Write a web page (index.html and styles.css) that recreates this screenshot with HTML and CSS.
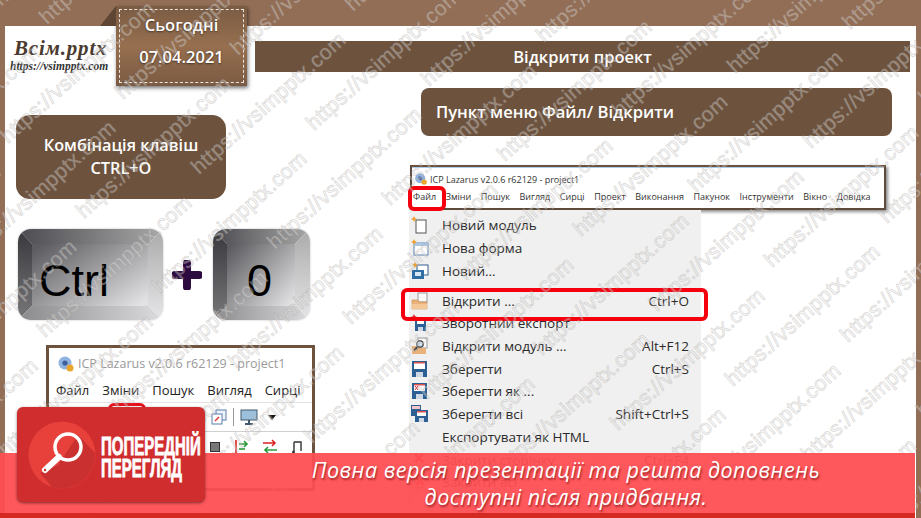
FILE: index.html
```html
<!DOCTYPE html>
<html lang="uk">
<head>
    <meta charset="UTF-8">
    <title>Відкрити проект</title>
    <link rel="stylesheet" href="styles.css">
</head>
<body>
    <div class="slide">
        <div class="sheet">
            <header class="head">
                <div class="logo">
                    <div class="logo-name">Всім.pptx</div>
                    <div class="logo-url">https://vsimpptx.com</div>
                </div>
                <div class="date-tag">
                    <span class="fold"></span>
                    <div class="date-inner">
                        <div>Сьогодні</div>
                        <div>07.04.2021</div>
                    </div>
                </div>
                <h1 class="title-bar">Відкрити проект</h1>
            </header>

            <div class="columns">
                <section class="left">
                    <div class="combo-box">Комбінація клавіш<br>CTRL+O</div>
                    <div class="keys">
                        <div class="key key-ctrl">
                            <svg class="bevel" width="145" height="91" viewBox="0 0 145 91">
                                <defs>
                                    <linearGradient id="topG" x1="0" x2="1" y1="0" y2="0"><stop offset="0" stop-color="#4b4b50"/><stop offset="1" stop-color="#a8a8a8"/></linearGradient>
                                    <linearGradient id="leftG" x1="0" x2="0" y1="0" y2="1"><stop offset="0" stop-color="#38383c"/><stop offset="1" stop-color="#77777a"/></linearGradient>
                                    <linearGradient id="rightG" x1="0" x2="0" y1="0" y2="1"><stop offset="0" stop-color="#aaa"/><stop offset="1" stop-color="#e6e6e8"/></linearGradient>
                                    <linearGradient id="botG" x1="0" x2="1" y1="0" y2="0"><stop offset="0" stop-color="#8a8a8c"/><stop offset="1" stop-color="#dcdcde"/></linearGradient>
                                    <linearGradient id="faceG" x1="0" x2="1" y1="0.1" y2="0.9"><stop offset="0" stop-color="#5c5c60"/><stop offset="1" stop-color="#e2e2e4"/></linearGradient>
                                </defs>
                                <polygon points="0,0 145,0 130,15 14,15" fill="url(#topG)"/>
                                <polygon points="0,0 14,15 14,77 0,91" fill="url(#leftG)"/>
                                <polygon points="145,0 130,15 130,77 145,91" fill="url(#rightG)"/>
                                <polygon points="0,91 14,77 130,77 145,91" fill="url(#botG)"/>
                                <rect x="14" y="15" width="116" height="62" fill="url(#faceG)"/>
                            </svg>
                            <span class="key-label">Ctrl</span>
                        </div>
                        <svg class="plus" width="30" height="30" viewBox="0 0 30 30"><path d="M15 3v24M3 15h24" stroke="#2d0a3f" stroke-width="8" stroke-linecap="round"/></svg>
                        <div class="key key-o">
                            <svg class="bevel" width="97" height="91" viewBox="0 0 97 91">
                                <polygon points="0,0 97,0 82,15 14,15" fill="url(#topG)"/>
                                <polygon points="0,0 14,15 14,77 0,91" fill="url(#leftG)"/>
                                <polygon points="97,0 82,15 82,77 97,91" fill="url(#rightG)"/>
                                <polygon points="0,91 14,77 82,77 97,91" fill="url(#botG)"/>
                                <rect x="14" y="15" width="68" height="62" fill="url(#faceG)"/>
                            </svg>
                            <span class="key-label">0</span>
                        </div>
                    </div>

                    <div class="small-window">
                        <div class="small-title">
                            <svg width="18" height="18" viewBox="0 0 18 18"><circle cx="8" cy="8" r="6.5" fill="#8fb2e0"/><circle cx="8" cy="8" r="2.6" fill="#3d5f9e"/><circle cx="13" cy="13" r="3.5" fill="#e9a52c"/></svg>
                            <span>ICP Lazarus v2.0.6 r62129 - project1</span>
                        </div>
                        <div class="small-menu">
                            <span>Файл</span><span>Зміни</span><span>Пошук</span><span>Вигляд</span><span>Сирці</span>
                        </div>
                        <div class="small-tools">
                            <svg width="16" height="16" viewBox="0 0 16 16"><rect x="5" y="1" width="10" height="10" fill="#eef3fa" stroke="#5b7fae"/><rect x="1" y="5" width="10" height="10" fill="#fff" stroke="#5b7fae"/><path d="M4 12l4-4" stroke="#d33" stroke-width="1.5"/></svg>
                            <i class="tool-sep"></i>
                            <svg width="18" height="16" viewBox="0 0 18 16"><rect x="1" y="1" width="16" height="10" fill="#9cc0dc" stroke="#44586b"/><path d="M9 11v3M5 15h8" stroke="#44586b" stroke-width="2"/></svg>
                            <i class="tool-arrow"></i>
                        </div>
                        <div class="small-tools lower">
                            <i class="tool-stop"></i>
                            <svg width="16" height="16" viewBox="0 0 16 16"><path d="M3 1v13" stroke="#d22" stroke-width="1.6"/><path d="M6 5h8M11 2l3 3-3 3" stroke="#2a9d3a" stroke-width="1.6" fill="none"/><path d="M6 10h6" stroke="#2a9d3a" stroke-width="1.6"/></svg>
                            <svg width="16" height="16" viewBox="0 0 16 16"><path d="M1 4h12M10 1l3 3-3 3" stroke="#d22" stroke-width="1.6" fill="none"/><path d="M15 11H3M6 8l-3 3 3 3" stroke="#2a9d3a" stroke-width="1.6" fill="none"/></svg>
                            <svg width="12" height="16" viewBox="0 0 12 16"><path d="M3 3h7v9M3 3v9" stroke="#333" stroke-width="1.4" fill="none"/><circle cx="2.500" cy="13" r="1.500" fill="#333"/></svg>
                        </div>
                        <span class="small-mark"></span>
                    </div>
                </section>

                <section class="right">
                    <div class="menu-box">Пункт меню Файл/ Відкрити</div>
                    <div class="main-window">
                        <div class="main-title">
                            <svg width="14" height="14" viewBox="0 0 18 18"><circle cx="8" cy="8" r="6.5" fill="#8fb2e0"/><circle cx="8" cy="8" r="2.6" fill="#3d5f9e"/><circle cx="13" cy="13" r="3.5" fill="#e9a52c"/></svg>
                            <span>ICP Lazarus v2.0.6 r62129 - project1</span>
                        </div>
                        <div class="main-menu">
                            <span>Файл</span><span>Зміни</span><span>Пошук</span><span>Вигляд</span><span>Сирці</span><span>Проект</span><span>Виконання</span><span>Пакунок</span><span>Інструменти</span><span>Вікно</span><span>Довідка</span>
                        </div>
                    </div>
                    <div class="file-menu">
                        <div class="item">
                            <svg class="ico" viewBox="0 0 18 18"><rect x="5" y="4" width="10" height="13" fill="#fff" stroke="#555"/><path d="M3 0l1 2 2 1-2 1-1 2-1-2-2-1 2-1z" fill="#f0a030"/></svg>
                            <span>Новий модуль</span>
                        </div>
                        <div class="item">
                            <svg class="ico" viewBox="0 0 18 18"><rect x="3" y="4" width="14" height="12" fill="#fff" stroke="#5b84b1"/><rect x="3" y="4" width="14" height="3" fill="#a9c6e3"/><path d="M3 0l1 2 2 1-2 1-1 2-1-2-2-1 2-1z" fill="#f0a030"/></svg>
                            <span>Нова форма</span>
                        </div>
                        <div class="item sep-after">
                            <svg class="ico" viewBox="0 0 18 18"><rect x="6" y="3" width="11" height="10" fill="#fff" stroke="#335f8e"/><rect x="1" y="8" width="12" height="9" fill="#2f6ea5"/><rect x="4" y="10" width="6" height="4" fill="#d7e6f3"/><path d="M4 0l1 2 2 1-2 1-1 2-1-2-2-1 2-1z" fill="#f0a030"/></svg>
                            <span>Новий...</span>
                        </div>
                        <div class="item">
                            <svg class="ico" viewBox="0 0 18 18"><rect x="7" y="1" width="9" height="9" fill="#fafafa" stroke="#999"/><path d="M1 8h6l1 2h8v7H1z" fill="#eab27a" stroke="#c58c50" stroke-width=".6"/><rect x="1" y="12" width="15" height="5" fill="#f3c796"/></svg>
                            <span>Відкрити ...</span><em>Ctrl+O</em>
                        </div>
                        <div class="item">
                            <svg class="ico" viewBox="0 0 18 18"><path d="M3 0l1 2 2 1-2 1-1 2-1-2-2-1 2-1z" fill="#d33"/><rect x="4" y="5" width="11" height="12" fill="#2c5f93"/><rect x="6" y="5" width="7" height="5" fill="#fff"/><rect x="7" y="13" width="5" height="4" fill="#cfd8e2"/></svg>
                            <span>Зворотний експорт</span>
                        </div>
                        <div class="item">
                            <svg class="ico" viewBox="0 0 18 18"><rect x="7" y="1" width="9" height="10" fill="#fafafa" stroke="#999"/><path d="M1 9h6l1 2h7v6H1z" fill="#eab27a"/><circle cx="9" cy="7" r="3.200" fill="#cfe3f3" stroke="#333" stroke-width="1.200"/><path d="M7 9.500l-4 4" stroke="#333" stroke-width="2"/></svg>
                            <span>Відкрити модуль ...</span><em>Alt+F12</em>
                        </div>
                        <div class="item">
                            <svg class="ico" viewBox="0 0 18 18"><rect x="1" y="1" width="15" height="16" fill="#2c5f93"/><rect x="3" y="2" width="11" height="7" fill="#fff"/><rect x="3" y="2" width="11" height="1.500" fill="#d9534f"/><rect x="5" y="12" width="7" height="5" fill="#cfd8e2"/></svg>
                            <span>Зберегти</span><em>Ctrl+S</em>
                        </div>
                        <div class="item">
                            <svg class="ico" viewBox="0 0 18 18"><rect x="1" y="1" width="15" height="16" fill="#2c5f93"/><rect x="3" y="2" width="11" height="7" fill="#fff"/><rect x="3" y="2" width="11" height="1.500" fill="#d9534f"/><path d="M4 4l3 4M7 4l-3 4" stroke="#d33"/><rect x="5" y="12" width="7" height="5" fill="#cfd8e2"/></svg>
                            <span>Зберегти як ...</span>
                        </div>
                        <div class="item">
                            <svg class="ico" viewBox="0 0 18 18"><rect x="0" y="0" width="10" height="11" fill="#2c5f93"/><rect x="1" y="1" width="8" height="3" fill="#f7c6c4"/><rect x="4" y="5" width="13" height="12" fill="#2c5f93"/><rect x="6" y="6" width="9" height="5" fill="#fff"/><rect x="6" y="6" width="9" height="1.500" fill="#d9534f"/><rect x="8" y="13" width="5" height="4" fill="#cfd8e2"/></svg>
                            <span>Зберегти всі</span><em>Shift+Ctrl+S</em>
                        </div>
                        <div class="item">
                            <span class="ico"></span>
                            <span>Експортувати як HTML</span>
                        </div>
                        <div class="item">
                            <svg class="ico" viewBox="0 0 18 18"><path d="M4 3l8 8M12 3l-8 8" stroke="#d22" stroke-width="2.200"/></svg>
                            <span>Закрити сторінку</span><em>Ctrl+F4</em>
                        </div>
                        <div class="item">
                            <svg class="ico" viewBox="0 0 18 18"><rect x="1" y="3" width="10" height="12" fill="none" stroke="#888"/><path d="M5 4l8 8M13 4l-8 8" stroke="#d22" stroke-width="2.200"/></svg>
                            <span>Закрити всі</span>
                        </div>
                    </div>
                    <span class="mark mark-file"></span>
                    <span class="mark mark-open"></span>
                </section>
            </div>
        </div>

        <svg class="watermark" id="watermark" width="921" height="518"></svg>

        <div class="banner">
            <p>Повна версія презентації та решта доповнень<br>доступні після придбання.</p>
        </div>

        <div class="preview-badge">
            <svg class="preview-icon" width="68" height="68" viewBox="0 0 68 68">
                <circle cx="34" cy="34" r="33.500" fill="#e8413b"/>
                <path d="M30 44L50 14L67 32A33.500 33.500 0 0 1 24 66L12 52z" fill="#c9302f"/>
                <circle cx="40" cy="26" r="13" fill="none" stroke="#fff" stroke-width="3.500"/>
                <path d="M31 36L17 49" stroke="#fff" stroke-width="6" stroke-linecap="round"/>
                <circle cx="17" cy="49" r="1.200" fill="#c9302f"/>
            </svg>
            <div class="preview-text">ПОПЕРЕДНІЙ<br>ПЕРЕГЛЯД</div>
        </div>
    </div>
    <script src="script.js"></script>
</body>
</html>
```

FILE: styles.css
```css
* {
    margin: 0;
    padding: 0;
    box-sizing: border-box;
}

body {
    width: 921px;
    height: 518px;
    overflow: hidden;
    font-family: "Open Sans", sans-serif;
}

.slide {
    position: relative;
    width: 921px;
    height: 518px;
    padding: 26px 5px 0;
    background: #936e56;
    overflow: hidden;
}

.sheet {
    width: 911px;
    height: 492px;
    background: #fff;
}

/* Header */
.head {
    display: flex;
    align-items: flex-start;
    height: 60px;
}

.logo {
    flex: none;
    width: 111px;
    padding: 10px 0 0 5px;
    font-family: "Liberation Serif", serif;
    font-style: italic;
    font-weight: bold;
    color: #4a3a30;
}

.logo-name {
    font-size: 21px;
    line-height: 24px;
    letter-spacing: 0.8px;
    padding-left: 4px;
}

.logo-url {
    font-size: 11.5px;
    line-height: 13px;
    color: #333;
}

.date-tag {
    position: relative;
    flex: none;
    width: 131px;
    height: 80px;
    margin-top: -20px;
    padding: 3px;
    background: linear-gradient(#7a5b43, #966f4f 50%, #7a5b43);
    box-shadow: 1px 2px 4px rgba(0, 0, 0, 0.55);
}

.fold {
    position: absolute;
    left: -16px;
    top: 0;
    width: 16px;
    height: 20px;
    background: #5f4534;
    clip-path: polygon(100% 0, 100% 100%, 0 100%);
}

.date-inner {
    display: flex;
    flex-direction: column;
    gap: 9px;
    height: 100%;
    padding-top: 3px;
    border: 1.5px dashed #ece6df;
    color: #fff;
    font-size: 16.5px;
    font-weight: 600;
    line-height: 23px;
    text-align: center;
    text-shadow: 0 1px 2px rgba(0, 0, 0, 0.5);
}

.title-bar {
    width: 655px;
    height: 31px;
    margin: 15px 0 0 8px;
    background: #6d533e;
    color: #fff;
    font-size: 16.5px;
    font-weight: 600;
    line-height: 31px;
    text-align: center;
}

/* Columns */
.columns {
    display: grid;
    grid-template-columns: 404px 1fr;
}

.left {
    padding-left: 11px;
}

.combo-box {
    width: 210px;
    height: 84px;
    margin-top: 29px;
    padding-top: 19px;
    background: #6d533e;
    border-radius: 14px;
    color: #fff;
    font-size: 16.3px;
    font-weight: 600;
    line-height: 23px;
    text-align: center;
}

.keys {
    display: flex;
    align-items: center;
    margin: 30px 0 0 2px;
}

.key {
    position: relative;
    flex: none;
    height: 91px;
    padding-top: 13px;
    border-radius: 13px;
    overflow: hidden;
    display: flex;
    align-items: center;
    justify-content: center;
    box-shadow: 0 0 2px rgba(0, 0, 0, 0.3);
}

.key-ctrl {
    width: 145px;
    justify-content: flex-start;
    padding-left: 21px;
}

.key-o {
    width: 97px;
    padding-right: 4px;
}

.bevel {
    position: absolute;
    left: 0;
    top: 0;
}

.key-label {
    position: relative;
    font-family: "Liberation Sans", sans-serif;
    font-size: 45px;
    color: #000;
}

.plus {
    flex: none;
    margin: 0 11px 0 9px;
}

/* Small window on the left */
.small-window {
    position: relative;
    width: 269px;
    height: 146px;
    margin: 25px 0 0 30px;
    border: 3px solid #6d533e;
    background: #fff;
}

.small-title {
    display: flex;
    align-items: center;
    gap: 3px;
    height: 28px;
    padding: 3px 0 0 8px;
    color: #999;
    font-size: 12.5px;
}

.small-menu {
    display: flex;
    gap: 13px;
    height: 26px;
    padding: 5px 0 0 7px;
    color: #222;
    font-size: 13px;
}

.small-tools {
    display: flex;
    align-items: center;
    justify-content: flex-end;
    gap: 6px;
    height: 30px;
    padding-right: 36px;
    border-top: 1px solid #e3e3e3;
    border-bottom: 1px solid #d0d0d0;
}

.small-tools.lower {
    gap: 13px;
    padding-right: 9px;
    border: 0;
}

.tool-sep {
    width: 1px;
    height: 18px;
    background: #999;
}

.tool-arrow {
    width: 0;
    height: 0;
    border-left: 4px solid transparent;
    border-right: 4px solid transparent;
    border-top: 5px solid #111;
    margin-left: 4px;
}

.tool-stop {
    width: 10px;
    height: 10px;
    background: #777;
    border: 1px solid #333;
}

.small-mark {
    position: absolute;
    left: 59px;
    top: 55px;
    width: 38px;
    height: 40px;
    border: 3px solid #e8101c;
    border-radius: 6px;
}

/* Right column */
.right {
    position: relative;
    padding-top: 2px;
}

.menu-box {
    width: 471px;
    height: 48px;
    margin-left: 12px;
    padding-left: 15px;
    background: #6d533e;
    border-radius: 8px;
    color: #fff;
    font-size: 16.6px;
    font-weight: 600;
    line-height: 48px;
}

.main-window {
    width: 476px;
    height: 45px;
    margin: 29px 0 0 1px;
    border: 2px solid #5d4a3a;
    border-top-color: #6d533e;
    background: #fff;
    box-shadow: 2px 2px 3px rgba(0, 0, 0, 0.45);
}

.main-title {
    display: flex;
    align-items: center;
    gap: 2px;
    height: 20px;
    padding: 3px 0 0 2px;
    border-top: 1px solid #a9cdea;
    color: #333;
    font-size: 9px;
}

.main-menu {
    display: flex;
    gap: 9.6px;
    padding: 3px 0 0 1px;
    color: #333;
    font-size: 9px;
}

.file-menu {
    width: 292px;
    height: 310px;
    padding-top: 4px;
    background: #f0f0f0;
    color: #2a2a2a;
    font-size: 13.5px;
}

.item {
    display: flex;
    align-items: center;
    height: 22.7px;
    padding: 0 12px 0 2px;
}

.item.sep-after {
    margin-bottom: 7.300px;
}

.item em {
    margin-left: auto;
    font-style: normal;
}

.ico {
    flex: none;
    width: 18px;
    height: 18px;
    margin-right: 13px;
}

.mark {
    position: absolute;
    border: 4px solid #f4000e;
    border-radius: 6px;
}

.mark-file {
    left: -1px;
    top: 100px;
    width: 38px;
    height: 25px;
}

.mark-open {
    left: -8px;
    top: 202px;
    width: 307px;
    height: 33px;
}

/* Overlays */
.watermark {
    position: absolute;
    left: 0;
    top: 0;
}

.wm-text {
    font-family: "Liberation Sans", sans-serif;
    font-size: 21px;
    letter-spacing: 0.4px;
    fill: rgba(255, 255, 255, 0.32);
    stroke: rgba(150, 145, 140, 0.3);
    stroke-width: 1px;
}

.banner {
    position: absolute;
    left: 0;
    right: 6px;
    top: 453px;
    height: 65px;
    padding: 3px 0 0 217px;
    background: rgba(255, 78, 82, 0.94);
    border-bottom: 5px solid #d42a22;
    color: #fff;
    font-size: 21.5px;
    font-style: italic;
    line-height: 27px;
    letter-spacing: 0.5px;
    text-align: center;
    text-shadow: 1px 2px 2px rgba(90, 0, 0, 0.55);
}

.preview-badge {
    position: absolute;
    left: 17px;
    top: 407px;
    display: flex;
    align-items: center;
    gap: 5px;
    width: 188px;
    height: 95px;
    padding-left: 11px;
    background: #d02d2f;
    border-radius: 6px;
    box-shadow: 0 1px 3px rgba(0, 0, 0, 0.5);
}

.preview-icon {
    flex: none;
}

.preview-text {
    flex: none;
    padding-top: 5px;
    color: #fff;
    font-family: "Liberation Sans", sans-serif;
    font-size: 25px;
    font-weight: bold;
    line-height: 22.5px;
    -webkit-text-stroke: 0.9px #fff;
    transform: scaleX(0.6);
    transform-origin: left center;
}
```

FILE: script.js
```js
// Repeat the site watermark over the slide on a slanted lattice
const svg = document.getElementById('watermark');
const originX = 733, originY = 387;

for (let i = -10; i <= 10; i++) {
    for (let j = -10; j <= 10; j++) {
        const x = originX + i * 115 + j * 39;
        const y = originY - i * 44 - j * 119;
        if (x < -170 || x > 930 || y < -10 || y > 680) continue;

        const text = document.createElementNS('http://www.w3.org/2000/svg', 'text');
        text.setAttribute('class', 'wm-text');
        text.setAttribute('transform', `translate(${x} ${y}) rotate(-42)`);
        text.textContent = 'https://vsimpptx.com';
        svg.appendChild(text);
    }
}
```
